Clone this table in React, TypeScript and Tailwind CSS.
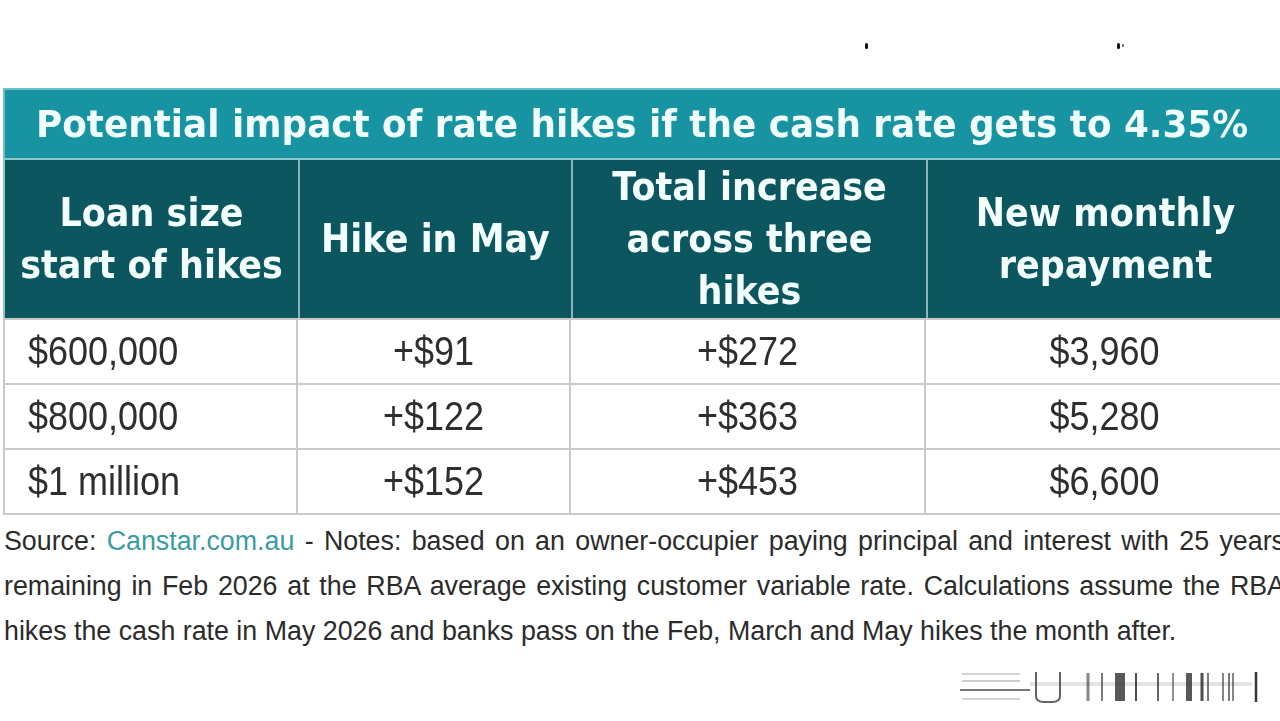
import React from "react"

const rows = [
  ["$600,000", "+$91", "+$272", "$3,960"],
  ["$800,000", "+$122", "+$363", "$5,280"],
  ["$1 million", "+$152", "+$453", "$6,600"],
]

function Watermark() {
  const bars = [
    [128, 3, 0.55], [142, 2, 0.6], [160, 10, 0.75], [176, 2, 0.8], [198, 2, 0.7],
    [213, 2, 0.5], [229, 6, 0.75], [242, 3, 0.8], [248, 2, 0.6], [263, 2, 0.55],
    [269, 2, 0.6], [273, 2, 0.55],
  ]
  return (
    <svg width="300" height="36" viewBox="0 0 300 36" className="block blur-[0.7px]">
      <g stroke="#222" fill="none">
        <line x1="2" y1="4" x2="60" y2="4" strokeWidth="1.5" opacity="0.25" />
        <line x1="2" y1="11" x2="60" y2="11" strokeWidth="1.5" opacity="0.3" />
        <line x1="0" y1="20" x2="70" y2="20" strokeWidth="2" opacity="0.6" />
        <line x1="2" y1="29" x2="60" y2="29" strokeWidth="1.5" opacity="0.25" />
        <line x1="70" y1="14" x2="292" y2="14" strokeWidth="4" opacity="0.12" />
        <path d="M76 2 V26 Q76 32 84 32 H92 Q100 32 100 26 V2" strokeWidth="2" opacity="0.7" />
        {bars.map(([x, w, o], i) => (
          <line key={i} x1={x} y1="3" x2={x} y2="31" strokeWidth={w} opacity={o} />
        ))}
        <line x1="296" y1="2" x2="296" y2="32" strokeWidth="2.5" opacity="0.9" />
      </g>
    </svg>
  )
}

export default function App() {
  return (
    <div className="w-[1280px] h-[721px] overflow-hidden bg-white font-['Liberation_Sans',Arial,sans-serif]">
      {/* cut-off text remnants above the table */}
      <div className="h-[88px] flex items-start pt-[43px]">
        <span className="ml-[865px] w-[3px] h-[6px] bg-[#111] rounded-sm" />
        <span className="ml-[249px] w-[3px] h-[6px] bg-[#111] rounded-sm" />
        <span className="ml-[2px] mt-[1px] w-[2px] h-[3px] bg-[#777]" />
      </div>

      <div className="ml-[3px] w-[1292px]">
        {/* title bar */}
        <div className="h-[70px] bg-[#1793a2] border-t-2 border-l-2 border-[#6cc0c9] flex items-center pl-[31px]">
          <h1 className="inline-block scale-y-[1.06] font-['DejaVu_Sans',sans-serif] font-bold text-[35.8px] leading-none text-[#f0fffe] whitespace-nowrap">
            Potential impact of rate hikes if the cash rate gets to 4.35%
          </h1>
        </div>

        {/* header */}
        <div className="grid grid-cols-[295px_273px_355px_1fr] h-[160px] bg-[#0c5660] border-t-2 border-l-2 border-[#8cc4c9] font-['DejaVu_Sans',sans-serif] font-bold text-[35px] leading-[47px] text-[#f2fffe] text-center">
          <div className="flex items-center justify-center border-r-2 border-[#8fb4b8]">
            <span className="inline-block scale-y-[1.1]">Loan size<br />start of hikes</span>
          </div>
          <div className="flex items-center justify-center border-r-2 border-[#8fb4b8]">
            <span className="inline-block scale-y-[1.1]">Hike in May</span>
          </div>
          <div className="flex items-center justify-center border-r-2 border-[#8fb4b8]">
            <span className="inline-block scale-y-[1.1]">Total increase<br />across three<br />hikes</span>
          </div>
          <div className="flex items-center justify-center pr-[12px]">
            <span className="inline-block scale-y-[1.1]">New monthly<br />repayment</span>
          </div>
        </div>

        {/* data rows */}
        <div className="border-l-2 border-t-2 border-[#c9c9c9] text-[36px] text-[#2e2e2e]">
          {rows.map((r) => (
            <div key={r[0]} className="grid grid-cols-[293px_273px_355px_1fr] h-[65px] border-b-2 border-[#c9c9c9]">
              <div className="flex items-center pl-[23px] border-r-2 border-[#c9c9c9]">
                <span className="inline-block scale-y-[1.12]">{r[0]}</span>
              </div>
              <div className="flex items-center justify-center border-r-2 border-[#c9c9c9]">
                <span className="inline-block scale-y-[1.12]">{r[1]}</span>
              </div>
              <div className="flex items-center justify-center border-r-2 border-[#c9c9c9]">
                <span className="inline-block scale-y-[1.12]">{r[2]}</span>
              </div>
              <div className="flex items-center justify-center pr-[12px]">
                <span className="inline-block scale-y-[1.12]">{r[3]}</span>
              </div>
            </div>
          ))}
        </div>
      </div>

      {/* notes */}
      <p className="w-[1285px] pl-[4px] pt-[4px] text-[26.8px] leading-[45px] text-[#2b2b2b] text-justify">
        Source: <span className="text-[#3a9ca3]">Canstar.com.au</span> - Notes: based on an owner-occupier paying principal and interest with 25 years remaining in Feb 2026 at the RBA average existing customer variable rate. Calculations assume the RBA hikes the cash rate in May 2026 and banks pass on the Feb, March and May hikes the month after.
      </p>

      <div className="flex justify-end pr-[20px] mt-[16px]">
        <Watermark />
      </div>
    </div>
  )
}
